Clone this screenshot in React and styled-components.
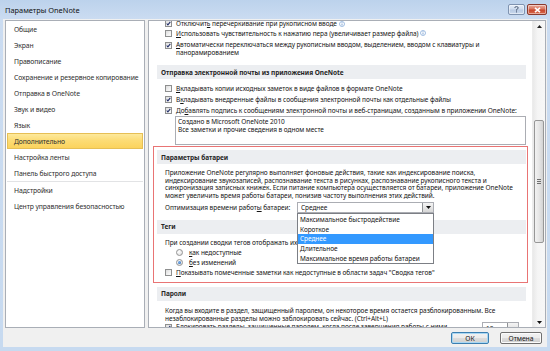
import React from "react";
import styled, { createGlobalStyle } from "styled-components";

const FONT = `"Noto Sans", "Open Sans", "DejaVu Sans", sans-serif`;

const Global = createGlobalStyle`
  html, body { margin: 0; padding: 0; }
  body {
    width: 550px; height: 351px; overflow: hidden;
    font-family: ${FONT}; font-size: 6.5px; letter-spacing: -0.05px; color: #141414;
  }
  * { box-sizing: border-box; }
`;

const Window = styled.div`
  width: 550px;
  height: 351px;
  display: flex;
  flex-direction: column;
  padding: 0 3px 4px 3px;
  background: linear-gradient(180deg, #bcd2ec 0px, #cbdcf1 19px, #c7daf0 100%);
`;

const TitleBar = styled.div`
  height: 19px;
  display: flex;
  align-items: center;
  padding-left: 2px;
  font-size: 7.4px;
  letter-spacing: 0;
  color: #111;
`;

const TitleText = styled.span`
  flex: 1;
`;

const CaptionButton = styled.div`
  height: 11px;
  width: ${(p) => (p.$close ? 20 : 17)}px;
  margin-left: ${(p) => (p.$close ? 2 : 0)}px;
  border: 1px solid ${(p) => (p.$close ? "#8a3a2e" : "#7f93b0")};
  border-radius: 2px;
  display: flex;
  align-items: center;
  justify-content: center;
  background: ${(p) =>
    p.$close
      ? "linear-gradient(180deg, #e9a99b 0%, #d9765f 45%, #c8462c 55%, #d8684b 100%)"
      : "linear-gradient(180deg, #e4edf8 0%, #cfdcee 45%, #b9cbe4 55%, #c9d8ec 100%)"};
  box-shadow: inset 0 0 0 1px rgba(255, 255, 255, 0.45);
`;

const Body = styled.div`
  flex: 1;
  display: flex;
  flex-direction: column;
  background: #f0f0f0;
  padding: 1px 1px 0 2px;
`;

const Main = styled.div`
  height: 308px;
  display: flex;
  gap: 3px;
`;

const NavPanel = styled.div`
  width: 140px;
  background: #fff;
  border: 1px solid #a9aeb6;
  display: flex;
  flex-direction: column;
  font-size: 6.8px;
  letter-spacing: -0.1px;
`;

const NavItem = styled.div`
  height: 16px;
  margin: 0 1px;
  padding-left: 6px;
  display: flex;
  align-items: center;
  color: #2e2e2e;
  white-space: nowrap;
  border: 1px solid ${(p) => (p.$active ? "#e6bf55" : "transparent")};
  background: ${(p) =>
    p.$active
      ? "linear-gradient(180deg, #fde99c 0%, #fcdc76 45%, #fbd35d 100%)"
      : "transparent"};
`;

const NavSeparator = styled.div`
  height: 1px;
  margin: 0 1px;
  background: #e2e3e5;
`;

const ContentPanel = styled.div`
  flex: 1;
  background: #fff;
  border: 1px solid #a9aeb6;
  display: flex;
`;

const Scroller = styled.div`
  flex: 1;
  overflow: hidden;
`;

const Column = styled.div`
  margin-top: -2px;
  padding: 0 6px 0 8px;
  display: flex;
  flex-direction: column;
`;

const Row = styled.div`
  height: ${(p) => p.$h || 11}px;
  margin-top: ${(p) => p.$mt || 0}px;
  padding-left: ${(p) => p.$indent ?? 8}px;
  display: flex;
  align-items: ${(p) => (p.$top ? "flex-start" : "center")};
  gap: ${(p) => p.$gap ?? 4}px;
  white-space: nowrap;
`;

const MultiRow = styled.div`
  padding: 3px 0 0 8px;
  display: flex;
  align-items: flex-start;
  gap: 4px;
  line-height: 8px;
  white-space: nowrap;
`;

const BoxWrap = styled.span`
  display: inline-flex;
  margin-top: ${(p) => p.$mt || 0}px;
`;

const CheckBoxBox = styled.span`
  width: 7px;
  height: 7px;
  flex: none;
  border: 1px solid #8e8f8f;
  background: linear-gradient(135deg, #dcdcdc 0%, #f2f2f2 60%, #fbfbfb 100%);
  display: inline-flex;
  align-items: center;
  justify-content: center;
`;

const RadioCircle = styled.span`
  width: 7px;
  height: 7px;
  flex: none;
  border-radius: 50%;
  border: 1px solid #939393;
  background: radial-gradient(circle at 35% 35%, #ffffff 0%, #e2e2e2 80%);
  display: inline-flex;
  align-items: center;
  justify-content: center;
`;

const RadioDot = styled.span`
  width: 3px;
  height: 3px;
  border-radius: 50%;
  background: radial-gradient(circle at 40% 40%, #7fb4ef 0%, #1c5fb0 100%);
`;

const Band = styled.div`
  height: 14px;
  margin-top: ${(p) => p.$mt || 0}px;
  background: #eceef1;
  padding-left: 4px;
  display: flex;
  align-items: center;
  font-weight: bold;
  color: #262626;
  white-space: nowrap;
`;

const Para = styled.div`
  margin-top: ${(p) => p.$mt || 0}px;
  padding-left: 8px;
  line-height: 7.6px;
  white-space: nowrap;
`;

const TextArea = styled.div`
  height: 29px;
  margin-left: 18px;
  border: 1px solid #abadb3;
  padding: 1px 0 0 2px;
  line-height: 8px;
  white-space: nowrap;
`;

const Highlight = styled.div`
  margin: 1px -2px 0 -4px;
  border: 1px solid #e97474;
  padding: 3px 1px 4px 3px;
  display: flex;
  flex-direction: column;
`;

const OptRow = styled.div`
  margin-top: 2.6px;
  height: 11px;
  padding-left: 8px;
  display: flex;
  align-items: center;
  white-space: nowrap;
`;

const OptLabel = styled.span`
  width: 132px;
  flex: none;
`;

const Select = styled.div`
  position: relative;
  width: ${(p) => p.$w}px;
  height: ${(p) => p.$h || 11}px;
  margin-right: ${(p) => p.$mr || 0}px;
  flex: none;
  border: 1px solid #abadb3;
  background: #fff;
  display: flex;
  align-items: center;
  padding-left: 3px;
  align-self: ${(p) => (p.$top ? "flex-start" : "center")};
`;

const SelectValue = styled.span`
  flex: 1;
  min-width: 0;
  overflow: hidden;
  white-space: nowrap;
`;

const SelectArrow = styled.span`
  width: 11px;
  flex: none;
  align-self: stretch;
  border-left: 1px solid #8f9296;
  background: linear-gradient(180deg, #f4f4f4 0%, #e6e6e6 50%, #d7d7d7 100%);
  display: flex;
  align-items: center;
  justify-content: center;
`;

const DropList = styled.div`
  position: absolute;
  left: -1px;
  top: 10px;
  width: 137px;
  height: 51px;
  border: 1px solid #7c7f85;
  background: #fff;
  padding-top: 0.5px;
  z-index: 5;
`;

const DropItem = styled.div`
  height: 9.8px;
  padding-left: 2px;
  display: flex;
  align-items: center;
  white-space: nowrap;
  background: ${(p) => (p.$sel ? "#3399ff" : "transparent")};
  color: ${(p) => (p.$sel ? "#fff" : "#141414")};
`;

const TagText = styled.div`
  margin-top: 4px;
  height: 10px;
  padding-left: 8px;
  display: flex;
  align-items: center;
  white-space: nowrap;
`;

const LabelFill = styled.span`
  flex: 1;
  min-width: 0;
  overflow: hidden;
  line-height: 10px;
`;

const ScrollBar = styled.div`
  width: 13px;
  flex: none;
  display: flex;
  flex-direction: column;
  background: linear-gradient(90deg, #e9e9e9 0%, #f5f5f5 40%, #f7f7f7 100%);
  border-left: 1px solid #ececec;
`;

const ScrollArrow = styled.div`
  height: 10px;
  display: flex;
  align-items: center;
  justify-content: center;
`;

const ScrollTrack = styled.div`
  flex: 1;
  display: flex;
  flex-direction: column;
  padding: 0 1px;
`;

const Thumb = styled.div`
  margin-top: ${(p) => p.$top}px;
  height: ${(p) => p.$h}px;
  border: 1px solid #979797;
  border-radius: 2px;
  background: linear-gradient(90deg, #f2f2f2 0%, #e6e6e6 50%, #d3d3d3 100%);
  display: flex;
  align-items: center;
  justify-content: center;
`;

const Grip = styled.div`
  width: 4px;
  height: 5px;
  background: repeating-linear-gradient(180deg, #6f6f6f 0px, #6f6f6f 1px, transparent 1px, transparent 2px);
`;

const Footer = styled.div`
  height: 19px;
  display: flex;
  justify-content: flex-end;
  align-items: flex-start;
  gap: 11px;
  padding: 4px 4px 0 0;
`;

const Button = styled.div`
  width: ${(p) => p.$w}px;
  height: 12px;
  border: 1px solid ${(p) => (p.$default ? "#3c7fb1" : "#707070")};
  border-radius: 2px;
  background: linear-gradient(180deg, #f2f2f2 0%, #ebebeb 50%, #dddddd 50%, #cfcfcf 100%);
  box-shadow: inset 0 0 0 1px ${(p) => (p.$default ? "#a9d7f3" : "#fbfbfb")};
  display: flex;
  align-items: center;
  justify-content: center;
  color: #141414;
  font-size: 6.8px;
`;

const U = styled.span`
  text-decoration: underline;
  text-underline-offset: 1px;
  text-decoration-thickness: 0.5px;
`;

const InfoWrap = styled.span`
  display: inline-flex;
  margin-left: -2px;
`;

const Info = () => (
  <InfoWrap>
    <svg width="6" height="6" viewBox="0 0 6 6">
      <circle cx="3" cy="3" r="2.5" fill="#fff" stroke="#88acd9" strokeWidth="0.8" />
      <rect x="2.65" y="2.5" width="0.7" height="2" fill="#4c7fc0" />
      <rect x="2.65" y="1.3" width="0.7" height="0.7" fill="#4c7fc0" />
    </svg>
  </InfoWrap>
);

const Check = ({ checked, mt }) => (
  <BoxWrap $mt={mt}>
    <CheckBoxBox>
      {checked && (
        <svg width="5" height="5" viewBox="0 0 5 5">
          <path d="M0.7 2.5 L1.9 3.8 L4.3 0.9" stroke="#24306a" strokeWidth="1.1" fill="none" />
        </svg>
      )}
    </CheckBoxBox>
  </BoxWrap>
);

const Radio = ({ checked }) => (
  <RadioCircle>{checked && <RadioDot />}</RadioCircle>
);

const DownTri = () => (
  <svg width="5" height="3" viewBox="0 0 5 3">
    <path d="M0 0 H5 L2.5 3 Z" fill="#111" />
  </svg>
);

const UpTri = () => (
  <svg width="5" height="3" viewBox="0 0 5 3">
    <path d="M0 3 H5 L2.5 0 Z" fill="#222" />
  </svg>
);

const navItems = [
  "Общие",
  "Экран",
  "Правописание",
  "Сохранение и резервное копирование",
  "Отправка в OneNote",
  "Звук и видео",
  "Язык",
  "Дополнительно",
  "Настройка ленты",
  "Панель быстрого доступа",
];

const navItems2 = ["Надстройки", "Центр управления безопасностью"];

const options = [
  "Максимальное быстродействие",
  "Короткое",
  "Среднее",
  "Длительное",
  "Максимальное время работы батареи",
];

export default function App() {
  return (
    <>
      <Global />
      <Window>
        <TitleBar>
          <TitleText>Параметры OneNote</TitleText>
          <CaptionButton>
            <svg width="5" height="7" viewBox="0 0 5 7">
              <path d="M0.8 1.9 Q0.8 0.6 2.5 0.6 Q4.2 0.6 4.2 1.9 Q4.2 2.9 2.5 3.6 V4.6" stroke="#3e4d66" strokeWidth="0.9" fill="none" />
              <rect x="2" y="5.4" width="1" height="1" fill="#3e4d66" />
            </svg>
          </CaptionButton>
          <CaptionButton $close>
            <svg width="7" height="6" viewBox="0 0 7 6">
              <path d="M1 0.8 L6 5.2 M6 0.8 L1 5.2" stroke="#fff" strokeWidth="1.6" />
            </svg>
          </CaptionButton>
        </TitleBar>
        <Body>
          <Main>
            <NavPanel>
              {navItems.map((t) => (
                <NavItem key={t} $active={t === "Дополнительно"}>
                  {t}
                </NavItem>
              ))}
              <NavSeparator />
              {navItems2.map((t) => (
                <NavItem key={t}>{t}</NavItem>
              ))}
            </NavPanel>
            <ContentPanel>
              <Scroller>
                <Column>
                  <Row $h={9}>
                    <Check checked />
                    <span>
                      Отключит<U>ь</U> перечеркивание при рукописном вводе
                    </span>
                    <Info />
                  </Row>
                  <Row $h={10}>
                    <Check />
                    <span>
                      <U>И</U>спользовать чувствительность к нажатию пера (увеличивает размер файла)
                    </span>
                    <Info />
                  </Row>
                  <MultiRow>
                    <Check checked mt={0.5} />
                    <span>
                      <U>А</U>втоматически переключаться между рукописным вводом, выделением, вводом с клавиатуры и
                      <br />
                      панорамированием
                    </span>
                  </MultiRow>
                  <Band $mt={8}>Отправка электронной почты из приложения OneNote</Band>
                  <Row $mt={4}>
                    <Check />
                    <span>
                      <U>В</U>кладывать копии исходных заметок в виде файлов в формате OneNote
                    </span>
                  </Row>
                  <Row>
                    <Check checked />
                    <span>
                      В<U>к</U>ладывать внедренные файлы в сообщения электронной почты как отдельные файлы
                    </span>
                  </Row>
                  <Row>
                    <Check checked />
                    <span>
                      До<U>б</U>авлять подпись к сообщениям электронной почты и веб-страницам, созданным в приложении OneNote:
                    </span>
                  </Row>
                  <TextArea>
                    Создано в Microsoft OneNote 2010
                    <br />
                    Все заметки и прочие сведения в одном месте
                  </TextArea>
                  <Highlight>
                    <Band>Параметры батареи</Band>
                    <Para $mt={5}>
                      Приложение OneNote регулярно выполняет фоновые действия, такие как индексирование поиска,
                      <br />
                      индексирование звукозаписей, распознавание текста в рисунках, распознавание рукописного текста и
                      <br />
                      синхронизация записных книжек. Если питание компьютера осуществляется от батареи, приложение OneNote
                      <br />
                      может увеличить время работы батареи, понизив частоту выполнения этих действий.
                    </Para>
                    <OptRow>
                      <OptLabel>
                        Оптимизация времени работ<U>ы</U> батареи:
                      </OptLabel>
                      <Select $w={137}>
                        <SelectValue>Среднее</SelectValue>
                        <SelectArrow>
                          <DownTri />
                        </SelectArrow>
                        <DropList>
                          {options.map((o) => (
                            <DropItem key={o} $sel={o === "Среднее"}>
                              {o}
                            </DropItem>
                          ))}
                        </DropList>
                      </Select>
                    </OptRow>
                    <Band $mt={7}>Теги</Band>
                    <TagText>При создании сводки тегов отображать их:</TagText>
                    <Row $h={10} $indent={19} $gap={6}>
                      <Radio />
                      <span>
                        <U>к</U>ак недоступные
                      </span>
                    </Row>
                    <Row $h={10} $indent={19} $gap={6}>
                      <Radio checked />
                      <span>
                        <U>б</U>ез изменений
                      </span>
                    </Row>
                    <Row $h={10}>
                      <Check />
                      <span>
                        <U>П</U>оказывать помеченные заметки как недоступные в области задач "Сводка тегов"
                      </span>
                    </Row>
                  </Highlight>
                  <Band $mt={4}>Пароли</Band>
                  <Para $mt={6}>
                    Когда вы входите в раздел, защищенный паролем, он некоторое время остается разблокированным. Все
                    <br />
                    незаблокированные разделы можно заблокировать сейчас. (Ctrl+Alt+L)
                  </Para>
                  <Row $h={12} $top>
                    <Check checked mt={2} />
                    <LabelFill>
                      <U>Б</U>локировать разделы, защищенные паролем, когда после завершения работы с ними
                    </LabelFill>
                    <Select $w={37} $h={12} $mr={7} $top>
                      <SelectValue>10 минут</SelectValue>
                      <SelectArrow>
                        <DownTri />
                      </SelectArrow>
                    </Select>
                  </Row>
                </Column>
              </Scroller>
              <ScrollBar>
                <ScrollArrow>
                  <UpTri />
                </ScrollArrow>
                <ScrollTrack>
                  <Thumb $top={89} $h={123}>
                    <Grip />
                  </Thumb>
                </ScrollTrack>
                <ScrollArrow>
                  <DownTri />
                </ScrollArrow>
              </ScrollBar>
            </ContentPanel>
          </Main>
          <Footer>
            <Button $w={38} $default>
              ОК
            </Button>
            <Button $w={42}>Отмена</Button>
          </Footer>
        </Body>
      </Window>
    </>
  );
}
